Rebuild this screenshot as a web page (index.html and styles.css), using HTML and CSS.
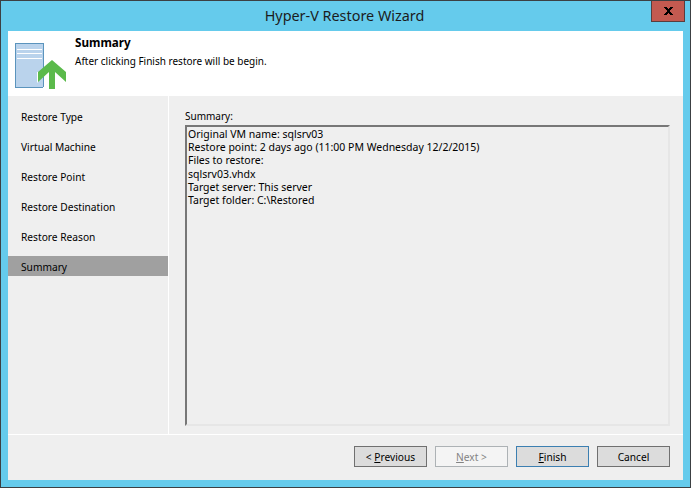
FILE: index.html
```html
<!DOCTYPE html>
<html lang="en">
<head>
<meta charset="utf-8">
<title>Hyper-V Restore Wizard</title>
<link rel="stylesheet" href="styles.css">
</head>
<body>
<div class="window">
  <div class="titlebar">
    <span class="title">Hyper-V Restore Wizard</span>
    <div class="close"><svg width="9" height="8" viewBox="0 0 9 8"><path d="M0 0h3v1h1v1h1V1h1V0h3v1H8v1H7v1H6v2h1v1h1v1h1v1H6V7H5V6H4v1H3v1H0V7h1V6h1V5h1V3H2V2H1V1H0z" fill="#000"/></svg></div>
  </div>
  <div class="client">
    <header class="header">
      <svg class="logo" width="52" height="47" viewBox="0 0 52 47">
        <rect x="0.5" y="0.500" width="28" height="44" fill="#bad3ec" stroke="#5b94bd"/>
        <path d="M2 6.500h25M2 10.500h25M2 15.500h25" stroke="#fff" stroke-width="1.200" fill="none"/>
        <path d="M37 17l14 12v10l-11-10v17h-6V29l-11 10V29z" fill="#5bba4b"/>
        <path d="M22.500 29v10.500M28 44.500h1" stroke="#fff" fill="none"/>
      </svg>
      <div class="heading">
        <div class="heading-title">Summary</div>
        <div class="heading-sub">After clicking Finish restore will be begin.</div>
      </div>
    </header>
    <div class="middle">
      <nav class="nav">
        <div class="nav-item">Restore Type</div>
        <div class="nav-item">Virtual Machine</div>
        <div class="nav-item">Restore Point</div>
        <div class="nav-item">Restore Destination</div>
        <div class="nav-item">Restore Reason</div>
        <div class="nav-item selected">Summary</div>
      </nav>
      <main class="content">
        <div class="label">Summary:</div>
        <div class="box">
          <div>Original VM name: sqlsrv03</div>
          <div>Restore point: 2 days ago (11:00 PM Wednesday 12/2/2015)</div>
          <div>Files to restore:</div>
          <div>sqlsrv03.vhdx</div>
          <div>Target server: This server</div>
          <div>Target folder: C:\Restored</div>
        </div>
      </main>
    </div>
    <footer class="footer">
      <div class="btn">&lt; <u>P</u>revious</div>
      <div class="btn disabled"><u>N</u>ext &gt;</div>
      <div class="btn default"><u>F</u>inish</div>
      <div class="btn">Cancel</div>
    </footer>
  </div>
</div>
</body>
</html>
```
FILE: styles.css
```css
* { box-sizing: border-box; }
html, body { margin: 0; padding: 0; }
body { width: 691px; height: 488px; overflow: hidden; font-family: "Noto Sans", "Open Sans", sans-serif; font-size: 10.2px; color: #000; }
.window { width: 691px; height: 488px; background: #65cbec; border: 1px solid #3c4043; padding: 0 7px 7px 7px; display: flex; flex-direction: column; }
.titlebar { height: 30px; flex: none; display: flex; justify-content: center; align-items: flex-start; position: relative; padding-right: 2px; }
.title { font-size: 14.400px; line-height: 29px; color: #1c1c1c; }
.close { position: absolute; right: -2px; top: 0; width: 34px; height: 21px; background: #c35a50; border: 1px solid #5a3d3d; border-top: 0; display: flex; align-items: center; justify-content: center; }
.client { flex: 1; width: 675px; background: #efefef; display: flex; flex-direction: column; }
.header { height: 65px; flex: none; background: #fff; display: flex; padding: 12px 0 0 7px; }
.logo { flex: none; display: block; }
.heading { margin-left: 8px; margin-top: -12px; }
.heading-title { font-weight: 700; line-height: 17px; margin-top: 3px; font-size: 11.700px; }
.heading-sub { line-height: 15px; margin-top: 3px; font-size: 10px; }
.middle { height: 339px; flex: none; display: flex; border-bottom: 1px solid #fff; }
.nav { width: 161px; flex: none; border-right: 1px solid #fff; padding-top: 10px; display: flex; flex-direction: column; gap: 10px; }
.nav-item { width: 160px; height: 20px; line-height: 22px; padding-left: 13px; }
.selected { background: #a0a0a0; }
.content { flex: 1; padding: 13px 13px 8px 16px; display: flex; flex-direction: column; }
.label { line-height: 14px; height: 16px; font-size: 10px; }
.box { flex: 1; border: 2px solid #777; border-right: 2px solid #e6e6e6; border-bottom: 2px solid #e6e6e6; padding: 1px 0 0 1px; line-height: 13.200px; font-size: 10.500px; }
.footer { flex: 1; display: flex; justify-content: flex-end; gap: 8px; padding: 11px 13px 0 0; }
.btn { width: 73px; height: 21px; background: #dcdcdc; border: 1px solid #707070; display: flex; align-items: center; justify-content: center; white-space: pre; }
.btn.disabled { background: #f4f4f4; border-color: #adb2b5; color: #838383; }
.btn.default { border-color: #3c7fb1; }
u { text-underline-offset: 1px; }
```
